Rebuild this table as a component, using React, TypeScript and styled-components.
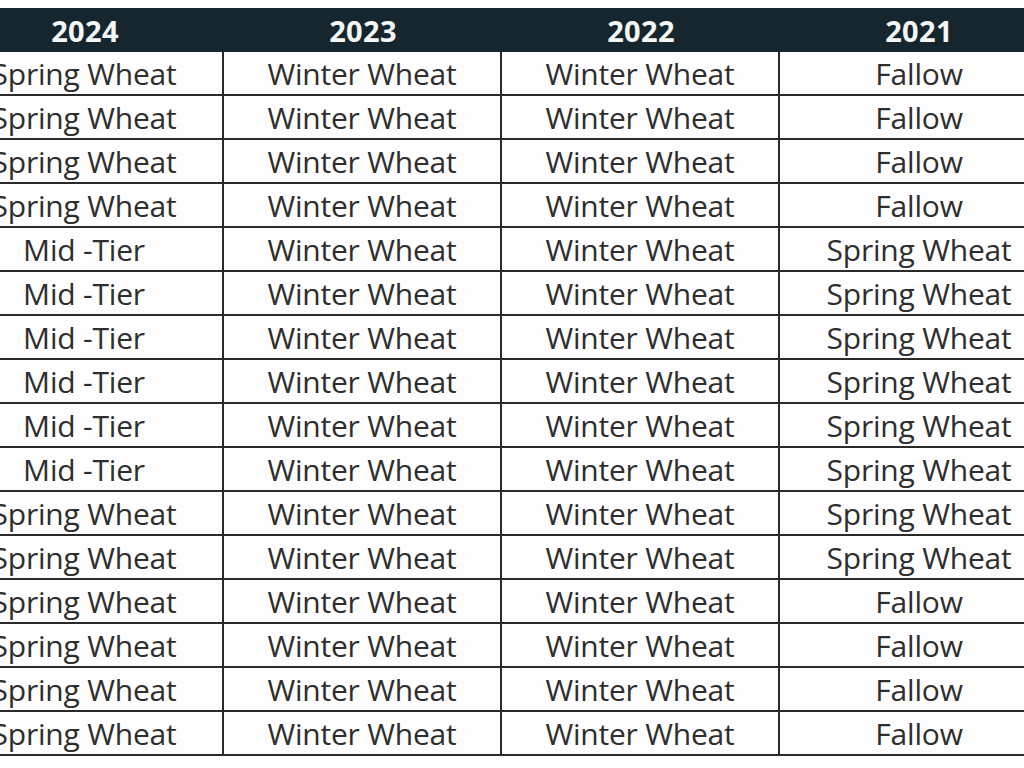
import React from "react";
import styled, { createGlobalStyle } from "styled-components";

const Global = createGlobalStyle`
  html, body { margin: 0; padding: 0; background: #ffffff; overflow: hidden; }
  body { font-family: "Open Sans", "Liberation Sans", sans-serif; }
`;

const Page = styled.div`
  width: 1024px;
  height: 768px;
  overflow: hidden;
  background: #fdfdfd;
  padding-top: 8px;
  box-sizing: border-box;
`;

const Table = styled.div`
  margin-left: -54px;
  width: 1112px;
  display: grid;
  grid-template-columns: repeat(4, 278px);
`;

const HeadCell = styled.div`
  height: 44px;
  background: #16262e;
  color: #f4f6f6;
  font-weight: 700;
  font-size: 29px;
  line-height: 1;
  display: flex;
  align-items: center;
  justify-content: center;
  letter-spacing: 0.3px;
`;

const Cell = styled.div<{ $last: boolean }>`
  height: 44px;
  box-sizing: border-box;
  border-bottom: 2px solid #2a2a2a;
  border-right: ${(p) => (p.$last ? "none" : "2px solid #2a2a2a")};
  color: #2e2e2e;
  font-size: 30px;
  line-height: 1;
  letter-spacing: -0.2px;
  display: flex;
  align-items: center;
  justify-content: center;
  padding-top: 1px;
`;

const years = ["2024", "2023", "2022", "2021"];

const col1 = [
  "Spring Wheat", "Spring Wheat", "Spring Wheat", "Spring Wheat",
  "Mid -Tier", "Mid -Tier", "Mid -Tier", "Mid -Tier", "Mid -Tier", "Mid -Tier",
  "Spring Wheat", "Spring Wheat", "Spring Wheat", "Spring Wheat", "Spring Wheat", "Spring Wheat",
];
const col4 = [
  "Fallow", "Fallow", "Fallow", "Fallow",
  "Spring Wheat", "Spring Wheat", "Spring Wheat", "Spring Wheat", "Spring Wheat", "Spring Wheat",
  "Spring Wheat", "Spring Wheat",
  "Fallow", "Fallow", "Fallow", "Fallow",
];

const rows = col1.map((c, i) => [c, "Winter Wheat", "Winter Wheat", col4[i]]);

export default function App() {
  return (
    <Page>
      <Global />
      <Table>
        {years.map((y) => (
          <HeadCell key={y}>{y}</HeadCell>
        ))}
        {rows.map((r, i) =>
          r.map((t, j) => (
            <Cell key={`${i}-${j}`} $last={j === 3}>
              {t}
            </Cell>
          ))
        )}
      </Table>
    </Page>
  );
}
